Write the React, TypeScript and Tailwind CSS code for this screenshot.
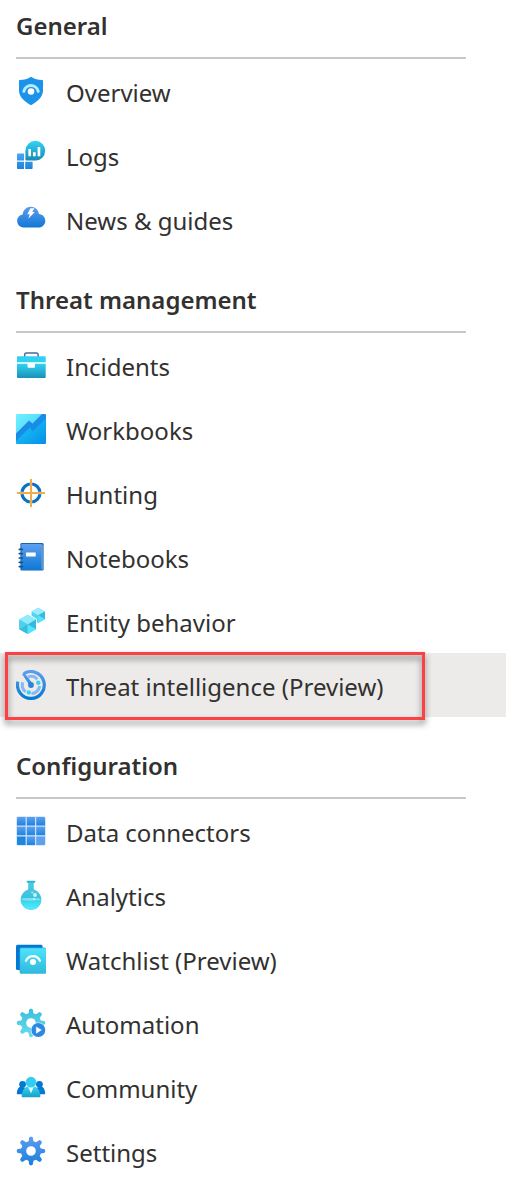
import type { ReactNode } from "react";

function Icon({ children }: { children: ReactNode }) {
  return (
    <svg viewBox="0 0 30 30" className="size-[30px] shrink-0" aria-hidden="true">
      {children}
    </svg>
  );
}

function Gradient({ id, from, to }: { id: string; from: string; to: string }) {
  return (
    <linearGradient id={id} x1="0" y1="0" x2="0" y2="1">
      <stop offset="0" stopColor={from} />
      <stop offset="1" stopColor={to} />
    </linearGradient>
  );
}

const gearPath =
  "M12.6 5.2 13.1 2Q13.4 .8 14.4 .8H15.6Q16.6 .8 16.9 2L17.4 5.2 20 6.3 22.7 4.4Q23.8 3.7 24.6 4.5L25.5 5.4Q26.3 6.2 25.6 7.3L23.7 10 24.8 12.6 28 13.1Q29.2 13.4 29.2 14.4V15.6Q29.2 16.6 28 16.9L24.8 17.4 23.7 20 25.6 22.7Q26.3 23.8 25.5 24.6L24.6 25.5Q23.8 26.3 22.7 25.6L20 23.7 17.4 24.8 16.9 28Q16.6 29.2 15.6 29.2H14.4Q13.4 29.2 13.1 28L12.6 24.8 10 23.7 7.3 25.6Q6.2 26.3 5.4 25.5L4.5 24.6Q3.7 23.8 4.4 22.7L6.3 20 5.2 17.4 2 16.9Q.8 16.6 .8 15.6V14.4Q.8 13.4 2 13.1L5.2 12.6 6.3 10 4.4 7.3Q3.7 6.2 4.5 5.4L5.4 4.5Q6.2 3.7 7.3 4.4L10 6.3ZM15 10.2A4.8 4.8 0 1 0 15 19.8A4.8 4.8 0 1 0 15 10.2Z";

const icons = {
  overview: (
    <Icon>
      <path
        d="M15 .8C18.5 3.4 22 4 26.2 4Q27 4 27 4.8V14.5C27 21.5 20.5 26 15 29.2C9.5 26 3 21.5 3 14.5V4.8Q3 4 3.8 4C8 4 11.5 3.4 15 .8Z"
        fill="#1b93eb"
      />
      <path d="M7.8 15.3A7.4 7.4 0 0 1 22.2 15.3" fill="none" stroke="#b5ecfd" strokeWidth="3" strokeLinecap="round" />
      <circle cx="15" cy="15.5" r="3.3" fill="#fff" />
    </Icon>
  ),
  logs: (
    <Icon>
      <defs>
        <Gradient id="logs-bubble" from="#32d4f5" to="#198ab3" />
        <Gradient id="logs-blocks" from="#4ba6f0" to="#1d83dc" />
      </defs>
      <path d="M1.8 13.5H8V20.5H1V14.3Q1 13.5 1.8 13.5ZM1 21.7H8V29H1.8Q1 29 1 28.2ZM9.2 21.7H16.6V28.2Q16.6 29 15.8 29H9.2Z" fill="url(#logs-blocks)" />
      <path d="M19.3 .8A9.9 9.9 0 1 1 19.3 20.6H10.2Q9.4 20.6 9.4 19.8V10.7A9.9 9.9 0 0 1 19.3 .8Z" fill="url(#logs-bubble)" />
      <path d="M12.4 9H15V16.2H12.4ZM17 12.2H19.7V16.2H17ZM21.6 7H24.3V16.2H21.6Z" fill="#fff" />
    </Icon>
  ),
  news: (
    <Icon>
      <defs>
        <Gradient id="news-cloud" from="#5e9cee" to="#0f78d6" />
      </defs>
      <path d="M7.5 23.5A6.6 6.6 0 0 1 6.6 10.4C7.6 5.5 10.8 2.8 14.8 2.8C19 2.8 22.3 5.8 22.9 9.9C26.7 10.2 29.3 13.1 29.3 16.7C29.3 20.5 26.3 23.5 22.5 23.5Z" fill="url(#news-cloud)" />
      <path d="M14.5 4.3H18.4L16.3 8.1H18.9L12.2 14.8L13.8 10.3H11.3Z" fill="#fff" />
    </Icon>
  ),
  incidents: (
    <Icon>
      <defs>
        <Gradient id="incidents-case" from="#32d4f5" to="#1991b8" />
      </defs>
      <path d="M8.7 7V4.6Q8.7 2.9 10.4 2.9H20.4Q22.1 2.9 22.1 4.6V7" fill="none" stroke="#4b6a99" strokeWidth="1.5" />
      <path d="M1.8 6.2H28.9Q29.7 6.2 29.7 7V12.6H1V7Q1 6.2 1.8 6.2Z" fill="#32d1f2" />
      <path d="M1 13.4H29.7V27.2Q29.7 28 28.9 28H1.8Q1 28 1 27.2Z" fill="url(#incidents-case)" />
      <path d="M1 12.6H29.7V13.5H19V16.7Q19 17.7 18 17.7H12.5Q11.5 17.7 11.5 16.7V13.5H1Z" fill="#fff" />
    </Icon>
  ),
  workbooks: (
    <Icon>
      <defs>
        <linearGradient id="book-top" x1="0" y1="0" x2="1" y2="1">
          <stop offset="0" stopColor="#72f0ff" />
          <stop offset="1" stopColor="#32c8f5" />
        </linearGradient>
        <linearGradient id="book-bottom" x1="0" y1="0" x2="1" y2="1">
          <stop offset=".3" stopColor="#14bdf6" />
          <stop offset="1" stopColor="#078ee6" />
        </linearGradient>
      </defs>
      <rect width="30" height="30" rx="1.2" fill="url(#book-top)" />
      <path d="M0 26 14 13 16.5 16.5 30 3.5V28.8Q30 30 28.8 30H1.2Q0 30 0 28.8Z" fill="url(#book-bottom)" />
      <path d="M0 19.5 13 6.5 16.5 9.5 26 0H28.8Q30 0 30 1.2V4.4L16.5 17.6 14 13.4 0 27Z" fill="#1b8ce6" />
    </Icon>
  ),
  hunting: (
    <Icon>
      <circle cx="15" cy="15" r="9" fill="none" stroke="#0b70c4" strokeWidth="3.2" />
      <path d="M15 1V29M1 15H29" stroke="#fff" strokeOpacity=".35" strokeWidth="3" />
      <path d="M15 1V29M1 15H29" stroke="#f0ac47" strokeWidth="2" />
    </Icon>
  ),
  notebooks: (
    <Icon>
      <defs>
        <Gradient id="notebook-cover" from="#5e9ff0" to="#0d78d4" />
      </defs>
      <rect x="4.4" y="1" width="23.2" height="27.6" rx="1.3" fill="#1865b5" />
      <rect x="5.4" y="2" width="20.2" height="26" rx=".5" fill="url(#notebook-cover)" />
      <path d="M26.1 2.5V27.5" stroke="#b9d8fa" strokeWidth=".7" />
      <rect x="10" y="10.4" width="9.7" height="4" rx=".4" fill="#fff" />
      <path d="M3.3 7.3H6.3M3.3 11.6H6.3M3.3 16H6.3M3.3 20.3H6.3M3.3 24.6H6.3" stroke="#174f8b" strokeWidth="1.7" strokeLinecap="round" />
    </Icon>
  ),
  entity: (
    <Icon>
      <path d="M11.7 8.7 20 13.5V23.2L11.7 28 3.2 23.2V13.5Z" fill="#51dced" />
      <path d="M11.7 8.7 20 13.5 11.7 18.4 3.2 13.5Z" fill="#92eaff" />
      <path d="M3.2 13.5 11.7 18.4 3.2 23.2Z" fill="#50cfe8" />
      <path d="M20 13.5 11.7 18.4 20 23.2Z" fill="#35badc" />
      <path d="M3.2 23.2 11.7 18.4V28Z" fill="#38bddd" />
      <path d="M11.7 18.4 20 23.2 11.7 28Z" fill="#50e6ff" />
      <path d="M22.2 1.7 29 5.4V13.2L22.2 17 21 16.3V13L15.6 9.8V5.4Z" fill="#50d6ec" />
      <path d="M22.2 1.7 29 5.4 22.2 9.3 15.6 5.4Z" fill="#9cebff" />
      <path d="M22.2 9.3 29 5.4V13.2Z" fill="#37badc" />
      <path d="M22.2 9.3 29 13.2 22.2 17Z" fill="#50e6ff" />
    </Icon>
  ),
  threat: (
    <Icon>
      <defs>
        <linearGradient id="radar-ring" gradientUnits="userSpaceOnUse" x1="0" y1="0" x2="0" y2="30">
          <stop offset="0" stopColor="#5ea0ef" />
          <stop offset="1" stopColor="#0078d4" />
        </linearGradient>
      </defs>
      <path d="M7.8 3.6A13.4 13.4 0 1 1 1.9 11.6" fill="none" stroke="url(#radar-ring)" strokeWidth="3.2" />
      <path d="M12 7A8.6 8.6 0 0 1 21.4 9.2M23.6 16A8.6 8.6 0 0 1 15.5 23.6M9.7 21.8A8.6 8.6 0 0 1 6.8 12.2" fill="none" stroke="#83b9f9" strokeWidth="3" />
      <path d="M6 3.9 8.4 3 16.6 13.4 13.6 15.4Z" fill="url(#radar-ring)" />
      <circle cx="15" cy="15" r="2.9" fill="#2d83dc" />
      <circle cx="22.3" cy="12.8" r="2.2" fill="#32d4e9" />
      <circle cx="12.8" cy="22.4" r="2.2" fill="#32d4e9" />
    </Icon>
  ),
  connectors: (
    <Icon>
      <defs>
        <Gradient id="connector-cell" from="#5ea0ef" to="#1d83df" />
      </defs>
      <rect x=".2" y=".2" width="29.6" height="29.6" rx="1.8" fill="#cfe3fa" />
      <path d="M2 1H9.6V9.5H1V2Q1 1 2 1Z" fill="url(#connector-cell)" />
      <rect x="10.8" y="1" width="8.2" height="8.5" fill="url(#connector-cell)" />
      <path d="M20.2 1H28Q29 1 29 2V9.5H20.2Z" fill="url(#connector-cell)" />
      <rect x="1" y="10.7" width="8.6" height="8.5" fill="url(#connector-cell)" />
      <rect x="10.8" y="10.7" width="8.2" height="8.5" fill="url(#connector-cell)" />
      <rect x="20.2" y="10.7" width="8.8" height="8.5" fill="url(#connector-cell)" />
      <path d="M1 20.4H9.6V29H2Q1 29 1 28Z" fill="#1f85df" />
      <rect x="10.8" y="20.4" width="8.2" height="8.6" fill="url(#connector-cell)" />
      <path d="M20.2 20.4H29V28Q29 29 28 29H20.2Z" fill="#5ea0ef" />
    </Icon>
  ),
  analytics: (
    <Icon>
      <defs>
        <Gradient id="flask-glass" from="#4fcbe0" to="#2ebbda" />
        <Gradient id="flask-liquid" from="#32d0ea" to="#50f0ff" />
      </defs>
      <path d="M12.2 2H17.8V9.6A10.3 10.3 0 1 1 12.2 9.6Z" fill="url(#flask-glass)" />
      <rect x="10.6" y=".8" width="8.8" height="1.9" rx=".9" fill="#30b7d3" />
      <path d="M4.7 19.2H25.3A10.3 10.3 0 0 1 4.7 19.2Z" fill="url(#flask-liquid)" />
      <ellipse cx="15" cy="19.3" rx="10" ry="1.4" fill="#7fe2ee" />
      <circle cx="19" cy="15" r="1.9" fill="#c9f6fc" />
      <circle cx="16.3" cy="12.6" r="1" fill="#a9eef7" />
      <circle cx="18" cy="19" r=".9" fill="#d2f8fd" />
    </Icon>
  ),
  watchlist: (
    <Icon>
      <defs>
        <Gradient id="watch-card" from="#4fe3fa" to="#2fb9db" />
      </defs>
      <rect x="0" y=".8" width="26.5" height="25.2" rx="1.5" fill="#0078d4" />
      <rect x="3.6" y="3.6" width="26.4" height="26" rx="1.5" fill="#2fa5dc" />
      <rect x="4.2" y="4.2" width="25.8" height="25.4" rx="1.2" fill="url(#watch-card)" />
      <path d="M10 16.8C13 10.6 21 10.6 24 16.8" fill="none" stroke="#fff" strokeWidth="2.2" strokeLinecap="round" />
      <circle cx="17" cy="18" r="3" fill="#fff" />
    </Icon>
  ),
  automation: (
    <Icon>
      <defs>
        <Gradient id="auto-gear" from="#38bfdd" to="#6ddcf1" />
      </defs>
      <path d={gearPath} fill="url(#auto-gear)" fillRule="evenodd" />
      <circle cx="22.3" cy="22" r="7.6" fill="#fff" />
      <circle cx="22.3" cy="22" r="7" fill="#2b88e5" />
      <path d="M20.3 18.9 25.4 22 20.3 25.2Z" fill="#fff" stroke="#fff" strokeWidth=".5" strokeLinejoin="round" />
    </Icon>
  ),
  community: (
    <Icon>
      <defs>
        <Gradient id="people-front" from="#32d4f5" to="#199fc5" />
      </defs>
      <g fill="#0078d4">
        <circle cx="6.6" cy="12.3" r="3.4" />
        <circle cx="23.4" cy="12.3" r="3.4" />
        <path d="M.8 21.6C1 17.5 2.5 15 4.5 14.5L10 16V22.3H1.5Q.8 22.3 .8 21.6ZM29.2 21.6C29 17.5 27.5 15 25.5 14.5L20 16V22.3H28.5Q29.2 22.3 29.2 21.6Z" />
      </g>
      <path d="M5.6 24C6.3 18.5 8 15.3 11.5 14.7H18.5C22 15.3 23.7 18.5 24.4 24Q24.5 25.2 23.3 25.2H6.7Q5.5 25.2 5.6 24Z" fill="url(#people-front)" />
      <path d="M12.2 15H17.8L15 21.2Z" fill="#e9fbff" />
      <circle cx="15" cy="10.2" r="5.4" fill="#32cdf0" />
    </Icon>
  ),
  settings: (
    <Icon>
      <defs>
        <Gradient id="settings-gear" from="#5e9cee" to="#1a7fdd" />
      </defs>
      <path d={gearPath} fill="url(#settings-gear)" fillRule="evenodd" />
    </Icon>
  ),
};

type Item = { label: string; icon: keyof typeof icons; current?: boolean };

const sections: { title: string; items: Item[] }[] = [
  {
    title: "General",
    items: [
      { label: "Overview", icon: "overview" },
      { label: "Logs", icon: "logs" },
      { label: "News & guides", icon: "news" },
    ],
  },
  {
    title: "Threat management",
    items: [
      { label: "Incidents", icon: "incidents" },
      { label: "Workbooks", icon: "workbooks" },
      { label: "Hunting", icon: "hunting" },
      { label: "Notebooks", icon: "notebooks" },
      { label: "Entity behavior", icon: "entity" },
      { label: "Threat intelligence (Preview)", icon: "threat", current: true },
    ],
  },
  {
    title: "Configuration",
    items: [
      { label: "Data connectors", icon: "connectors" },
      { label: "Analytics", icon: "analytics" },
      { label: "Watchlist (Preview)", icon: "watchlist" },
      { label: "Automation", icon: "automation" },
      { label: "Community", icon: "community" },
      { label: "Settings", icon: "settings" },
    ],
  },
];

function NavItem({ label, icon, current }: Item) {
  return (
    <li className="relative">
      <a
        href="#"
        aria-current={current ? "page" : undefined}
        className={`flex h-16 items-center gap-5 pl-4 ${current ? "bg-[#edebe9]" : ""}`}
      >
        {icons[icon]}
        <span className="pt-1 text-2xl">{label}</span>
      </a>
      {current && (
        <span className="pointer-events-none absolute -top-px right-[81px] -bottom-[3px] left-[5px] border-3 border-[#fb4143] drop-shadow-[0_4px_3px_rgba(0,0,0,0.5)]" />
      )}
    </li>
  );
}

export default function App() {
  return (
    <div className="min-h-screen bg-white pr-[23px] font-['Noto_Sans',sans-serif] text-[#323130]">
      <nav aria-label="Resource menu" className="flex flex-col gap-[23px]">
        {sections.map((section) => (
          <section key={section.title}>
            <h2 className="mr-10 ml-4 flex h-[59px] items-center border-b-2 border-[#c8c8c8] pb-1.5 text-2xl font-semibold">
              {section.title}
            </h2>
            <ul>
              {section.items.map((item) => (
                <NavItem key={item.label} {...item} />
              ))}
            </ul>
          </section>
        ))}
      </nav>
    </div>
  );
}
